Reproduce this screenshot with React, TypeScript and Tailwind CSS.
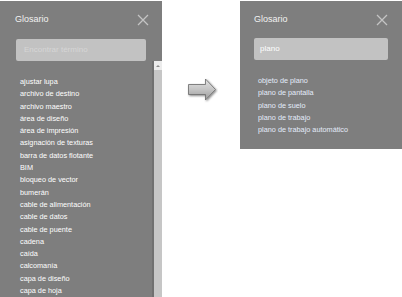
const terms = [
  "ajustar lupa",
  "archivo de destino",
  "archivo maestro",
  "área de diseño",
  "área de impresión",
  "asignación de texturas",
  "barra de datos flotante",
  "BIM",
  "bloqueo de vector",
  "bumerán",
  "cable de alimentación",
  "cable de datos",
  "cable de puente",
  "cadena",
  "caída",
  "calcomanía",
  "capa de diseño",
  "capa de hoja",
];

const results = [
  "objeto de plano",
  "plano de pantalla",
  "plano de suelo",
  "plano de trabajo",
  "plano de trabajo automático",
];

function CloseIcon() {
  return (
    <svg width="12" height="12" viewBox="0 0 12 12" className="block">
      <path d="M1 1L11 11M11 1L1 11" stroke="#c4c4c4" strokeWidth="1.3" />
    </svg>
  );
}

function Arrow() {
  return (
    <svg width="32" height="26" viewBox="0 0 32 26" className="block">
      <defs>
        <linearGradient id="ag" x1="0" y1="0" x2="0" y2="1">
          <stop offset="0" stopColor="#e4e4e4" />
          <stop offset="0.5" stopColor="#c4c4c4" />
          <stop offset="1" stopColor="#9a9a9a" />
        </linearGradient>
        <filter id="sh" x="-20%" y="-20%" width="140%" height="140%">
          <feGaussianBlur in="SourceAlpha" stdDeviation="0.8" />
          <feOffset dx="0.5" dy="0.8" />
          <feComponentTransfer>
            <feFuncA type="linear" slope="0.5" />
          </feComponentTransfer>
          <feMerge>
            <feMergeNode />
            <feMergeNode in="SourceGraphic" />
          </feMerge>
        </filter>
      </defs>
      <path
        d="M2.5 7.5H19.5V2L29.5 12.5L19.5 23V17.5H2.5Z"
        fill="url(#ag)"
        stroke="#6a6a6a"
        strokeWidth="0.8"
        strokeLinejoin="round"
        filter="url(#sh)"
      />
    </svg>
  );
}

export default function App() {
  return (
    <div className="w-[402px] h-[297px] overflow-hidden bg-white flex items-start pt-px font-['Liberation_Sans',Arial,sans-serif]">
      {/* full list */}
      <div className="w-[162px] h-[296px] bg-[#7e7e7e] flex flex-col shrink-0">
        <div className="h-[38px] flex items-center justify-between pl-[15px] pr-[13px]">
          <span className="text-[9px] text-[#f2f2f2]">Glosario</span>
          <CloseIcon />
        </div>
        <div className="mx-[16px] h-[22px] rounded-[2px] bg-[#c2c2c2] flex items-center px-[8px]">
          <span className="text-[8px] text-[#d6d6d6]">Encontrar término</span>
        </div>
        <div className="flex flex-1 min-h-0">
          <ul className="flex-1 pl-[20px] pt-[15px] overflow-hidden">
            {terms.map((t) => (
              <li key={t} className="text-[7.3px] leading-[12.3px] text-white whitespace-nowrap">
                {t}
              </li>
            ))}
          </ul>
          <div className="w-[10px] flex border-l-2 border-[#707070]">
            <div className="flex-1 flex flex-col bg-[#c6c6c6]">
              <div className="h-[9px] bg-[#ececec] flex items-center justify-center">
                <div className="w-0 h-0 border-l-[2px] border-r-[2px] border-b-[2px] border-l-transparent border-r-transparent border-b-[#8a8a8a]" />
              </div>
            </div>
          </div>
        </div>
      </div>

      {/* arrow */}
      <div className="w-[78px] shrink-0 flex justify-center pt-[76px] pl-[1px]">
        <Arrow />
      </div>

      {/* filtered */}
      <div className="w-[162px] h-[148px] bg-[#7e7e7e] flex flex-col shrink-0">
        <div className="h-[37px] flex items-center justify-between pl-[14px] pr-[14px]">
          <span className="text-[9px] text-[#f2f2f2]">Glosario</span>
          <CloseIcon />
        </div>
        <div className="ml-[14px] mr-[14px] h-[22px] rounded-[2px] bg-[#c2c2c2] flex items-center px-[6px]">
          <span className="text-[8px] text-white">plano</span>
        </div>
        <ul className="pl-[18px] pt-[15px]">
          {results.map((t) => (
            <li key={t} className="text-[7.3px] leading-[12.3px] text-[#e4ecfb] whitespace-nowrap">
              {t}
            </li>
          ))}
        </ul>
      </div>
    </div>
  );
}
